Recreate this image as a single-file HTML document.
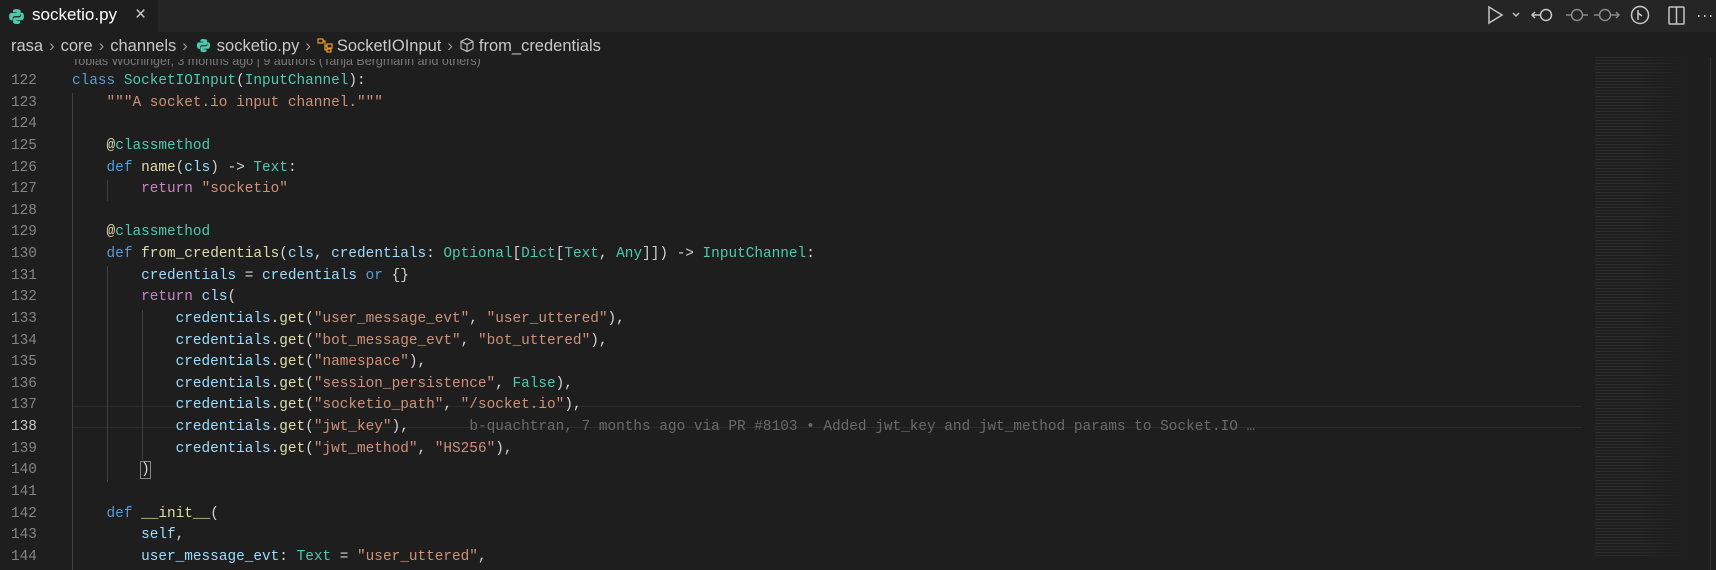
<!DOCTYPE html>
<html><head><meta charset="utf-8"><style>
*{margin:0;padding:0;box-sizing:border-box}
body{width:1716px;height:570px;background:#1e1e1e;overflow:hidden;position:relative;font-family:"Liberation Sans",sans-serif;color:#ccc}
.tabbar{position:absolute;left:0;top:0;width:1716px;height:32px;background:#252526}
.tab{position:absolute;left:0;top:0;width:158px;height:32px;background:#1e1e1e;color:#fff;font-size:17px}
.bc{position:absolute;left:11px;top:37px;font-size:16.5px;color:#c8c8c8;white-space:nowrap}
.bc span.s{color:#999;margin:0 6px}
.blame{position:absolute;left:72px;top:54px;font-size:12.5px;color:#7a7a7a;white-space:nowrap;clip-path:inset(5px 0 0 0)}
.code{position:absolute;left:0;top:71px;font-family:"Liberation Mono",monospace;font-size:14.4px}
.ln{position:relative;height:21.64px;line-height:21.64px;white-space:pre}
.num{position:absolute;left:0;width:72px;color:#858585}
.num b{font-weight:normal;position:absolute;left:11px}
.txt{position:absolute;left:72px;color:#d4d4d4}
.k{color:#569cd6}.c{color:#4ec9b0}.s{color:#ce9178}.v{color:#9cdcfe}.f{color:#dcdcaa}
.g{position:absolute;width:1px;background:#404040}
.cur{position:absolute;left:72px;width:1510px;height:21.64px;border-top:1px solid #2c2c2c;border-bottom:1px solid #2c2c2c}
.mm{position:absolute;left:1595px;top:57px;width:100px;height:500px;background:repeating-linear-gradient(#3a3a3a 0 1px,transparent 1px 3px);opacity:.55;-webkit-mask:linear-gradient(90deg,#000 0 40%,rgba(0,0,0,.5) 60%,transparent 95%)}
</style></head><body>
<div class="tabbar"></div>
<div class="tab">
<svg style="position:absolute;left:8px;top:8px" width="17" height="17" viewBox="0 0 16 16"><path d="M7.8 1C4.5 1 4.7 2.5 4.7 2.5V4h3.2v.6H3.4S1 4.3 1 8s2.1 3.6 2.1 3.6h1.3V9.8s-.1-2.1 2.1-2.1h3.4s2 0 2-2V2.8S12.2 1 7.8 1z M11.8 4.4H12.9s2.1-.1 2.1 3.6-2.4 3.5-2.4 3.5H8.1v.6h3.2v1.5s.2 1.5-3.1 1.5-3.4-1.8-3.4-1.8v-2.5c0-2 2-2 2-2h3.4s2.1 0 2.1-2.1z" fill="#4ec9b0"/></svg>
<span style="position:absolute;left:32px;top:5px">socketio.py</span>
<span style="position:absolute;left:135px;top:4px;color:#ccc;font-size:19px">×</span>
</div>
<svg style="position:absolute;left:1485px;top:2px" width="231" height="28" viewBox="0 0 231 28" fill="none" stroke="#c5c5c5" stroke-width="1.5">
<path d="M4 5 L17 13 L4 21 Z"/><path d="M28 11l3 3 3-3"/>
<circle cx="61" cy="13" r="5.5"/><path d="M47 13h8M50 10l-3 3 3 3"/>
<circle cx="92" cy="13" r="5.5" stroke="#888"/><path d="M81 13h5M98 13h5" stroke="#888"/>
<circle cx="120" cy="13" r="5.5" stroke="#888"/><path d="M109 13h5M126 13h8M131 10l3 3-3 3" stroke="#888"/>
<circle cx="155" cy="13" r="8.5"/><path d="M153 8v10M153 11l4 3"/>
<rect x="184" y="5" width="15" height="17" rx="1"/><path d="M191.5 5v17"/>
<path d="M213 14h1.5M219 14h1.5M225 14h1.5" stroke-width="2"/>
</svg>
<div class="bc">rasa<span class="s">›</span>core<span class="s">›</span>channels<span class="s">›</span><svg width="15" height="15" viewBox="0 0 16 16" style="vertical-align:-2px;margin:0 6px 0 2px"><path d="M7.8 1C4.5 1 4.7 2.5 4.7 2.5V4h3.2v.6H3.4S1 4.3 1 8s2.1 3.6 2.1 3.6h1.3V9.8s-.1-2.1 2.1-2.1h3.4s2 0 2-2V2.8S12.2 1 7.8 1z M11.8 4.4H12.9s2.1-.1 2.1 3.6-2.4 3.5-2.4 3.5H8.1v.6h3.2v1.5s.2 1.5-3.1 1.5-3.4-1.8-3.4-1.8v-2.5c0-2 2-2 2-2h3.4s2.1 0 2.1-2.1z" fill="#4ec9b0"/></svg>socketio.py<span class="s">›</span><svg width="16" height="16" viewBox="0 0 16 16" fill="none" stroke="#ee9d28" stroke-width="1.2" style="vertical-align:-2px;margin-right:4px"><rect x="1" y="2" width="5" height="4"/><rect x="10" y="7" width="5" height="4"/><rect x="10" y="12" width="4" height="3"/><path d="M6 4h2v9h2M8 9h2"/></svg>SocketIOInput<span class="s">›</span><svg width="16" height="16" viewBox="0 0 16 16" fill="none" stroke="#c5c5c5" stroke-width="1.1" style="vertical-align:-2px;margin-right:4px"><path d="M8 1.5l6 3v7l-6 3-6-3v-7z M2 4.5l6 3 6-3M8 7.5v7"/></svg>from_credentials</div>
<div class="blame">Tobias Wochinger, 3 months ago | 9 authors (Tanja Bergmann and others)</div>
<div class="cur" style="top:406px"></div>
<div class="g" style="left:72px;top:93px;height:477px"></div>
<div class="g" style="left:107px;top:180px;height:21px"></div>
<div class="g" style="left:107px;top:266px;height:216px"></div>
<div class="g" style="left:142px;top:310px;height:150px"></div>
<div class="code">
<div class="ln"><span class="num"><b>122</b></span><span class="txt"><span class="k">class</span> <span class="c">SocketIOInput</span>(<span class="c">InputChannel</span>):</span></div>
<div class="ln"><span class="num"><b>123</b></span><span class="txt">    <span class="s">"""A socket.io input channel."""</span></span></div>
<div class="ln"><span class="num"><b>124</b></span></div>
<div class="ln"><span class="num"><b>125</b></span><span class="txt">    <span class="f">@</span><span class="c">classmethod</span></span></div>
<div class="ln"><span class="num"><b>126</b></span><span class="txt">    <span class="k">def</span> <span class="f">name</span>(<span class="v">cls</span>) -> <span class="c">Text</span>:</span></div>
<div class="ln"><span class="num"><b>127</b></span><span class="txt">        <span class="k" style="color:#c586c0">return</span> <span class="s">"socketio"</span></span></div>
<div class="ln"><span class="num"><b>128</b></span></div>
<div class="ln"><span class="num"><b>129</b></span><span class="txt">    <span class="f">@</span><span class="c">classmethod</span></span></div>
<div class="ln"><span class="num"><b>130</b></span><span class="txt">    <span class="k">def</span> <span class="f">from_credentials</span>(<span class="v">cls</span>, <span class="v">credentials</span>: <span class="c">Optional</span>[<span class="c">Dict</span>[<span class="c">Text</span>, <span class="c">Any</span>]]) -> <span class="c">InputChannel</span>:</span></div>
<div class="ln"><span class="num"><b>131</b></span><span class="txt">        <span class="v">credentials</span> = <span class="v">credentials</span> <span class="k">or</span> {}</span></div>
<div class="ln"><span class="num"><b>132</b></span><span class="txt">        <span class="k" style="color:#c586c0">return</span> <span class="v">cls</span>(</span></div>
<div class="ln"><span class="num"><b>133</b></span><span class="txt">            <span class="v">credentials</span>.<span class="f">get</span>(<span class="s">"user_message_evt"</span>, <span class="s">"user_uttered"</span>),</span></div>
<div class="ln"><span class="num"><b>134</b></span><span class="txt">            <span class="v">credentials</span>.<span class="f">get</span>(<span class="s">"bot_message_evt"</span>, <span class="s">"bot_uttered"</span>),</span></div>
<div class="ln"><span class="num"><b>135</b></span><span class="txt">            <span class="v">credentials</span>.<span class="f">get</span>(<span class="s">"namespace"</span>),</span></div>
<div class="ln"><span class="num"><b>136</b></span><span class="txt">            <span class="v">credentials</span>.<span class="f">get</span>(<span class="s">"session_persistence"</span>, <span class="c">False</span>),</span></div>
<div class="ln"><span class="num"><b>137</b></span><span class="txt">            <span class="v">credentials</span>.<span class="f">get</span>(<span class="s">"socketio_path"</span>, <span class="s">"/socket.io"</span>),</span></div>
<div class="ln"><span class="num"><b style="color:#c6c6c6">138</b></span><span class="txt">            <span class="v">credentials</span>.<span class="f">get</span>(<span class="s">"jwt_key"</span>),       <span style="color:#6a6a6a">b-quachtran, 7 months ago via PR #8103 • Added jwt_key and jwt_method params to Socket.IO …</span></span></div>
<div class="ln"><span class="num"><b>139</b></span><span class="txt">            <span class="v">credentials</span>.<span class="f">get</span>(<span class="s">"jwt_method"</span>, <span class="s">"HS256"</span>),</span></div>
<div class="ln"><span class="num"><b>140</b></span><span class="txt">        <span style="outline:1px solid #888">)</span></span></div>
<div class="ln"><span class="num"><b>141</b></span></div>
<div class="ln"><span class="num"><b>142</b></span><span class="txt">    <span class="k">def</span> <span class="f">__init__</span>(</span></div>
<div class="ln"><span class="num"><b>143</b></span><span class="txt">        <span class="v">self</span>,</span></div>
<div class="ln"><span class="num"><b>144</b></span><span class="txt">        <span class="v">user_message_evt</span>: <span class="c">Text</span> = <span class="s">"user_uttered"</span>,</span></div>
</div>
<div class="mm"></div>
<div style="position:absolute;left:1710px;top:57px;width:6px;height:513px;border-left:1px solid #333"></div>
</body></html>
